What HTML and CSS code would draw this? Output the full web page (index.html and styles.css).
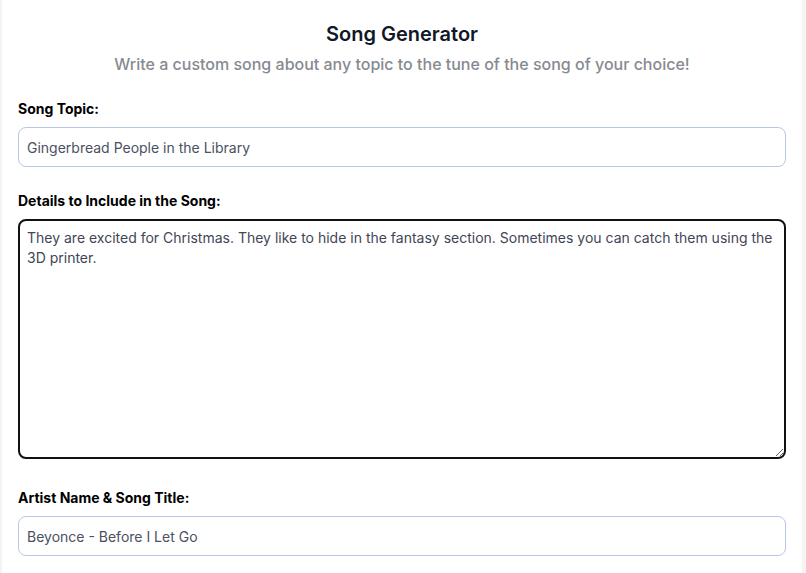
FILE: index.html
```html
<!DOCTYPE html>
<html lang="en">
<head>
<meta charset="utf-8">
<title>Song Generator</title>
<link rel="stylesheet" href="styles.css">
</head>
<body>
<main class="panel">
  <h1 class="title">Song Generator</h1>
  <p class="subtitle">Write a custom song about any topic to the tune of the song of your choice!</p>
  <form class="form">
    <div class="field field-topic">
      <label class="label" for="topic">Song Topic:</label>
      <input class="input" id="topic" type="text" value="Gingerbread People in the Library">
    </div>
    <div class="field field-details">
      <label class="label" for="details">Details to Include in the Song:</label>
      <textarea class="textarea" id="details">They are excited for Christmas. They like to hide in the fantasy section. Sometimes you can catch them using the 3D printer.</textarea>
    </div>
    <div class="field field-artist">
      <label class="label" for="artist">Artist Name &amp; Song Title:</label>
      <input class="input" id="artist" type="text" value="Beyonce - Before I Let Go">
    </div>
  </form>
</main>
</body>
</html>
```

FILE: styles.css
```css
html, body {
  margin: 0;
  padding: 0;
}
body {
  background: #f5f4f0;
  font-family: Inter, "Noto Sans", "Liberation Sans", sans-serif;
  height: 573px;
  overflow: hidden;
}
.panel {
  margin-left: 2px;
  width: 800px;
  box-sizing: border-box;
  min-height: 573px;
  background: #ffffff;
  padding: 20px 16px 0 16px;
}
.title {
  margin: 0;
  text-align: center;
  font-size: 20px;
  line-height: 28px;
  font-weight: 600;
  color: #111827;
}
.subtitle {
  margin: 4px 0 0 0;
  text-align: center;
  font-size: 16px;
  line-height: 24px;
  font-weight: 500;
  color: #878a91;
}
.form {
  display: flex;
  flex-direction: column;
  margin-top: 23px;
}
.field {
  display: flex;
  flex-direction: column;
  gap: 8px;
}
.field-details {
  margin-top: 24px;
}
.field-artist {
  margin-top: 29px;
}
.label {
  font-size: 14px;
  line-height: 20px;
  font-weight: 700;
  color: #000000;
}
.input {
  box-sizing: border-box;
  height: 40px;
  width: 768px;
  margin: 0;
  padding: 0 8px;
  border: 1px solid #b8c7e6;
  border-radius: 8px;
  font-family: inherit;
  font-size: 14px;
  color: #4b5161;
  background: #ffffff;
  outline: none;
}
.textarea {
  display: block;
  box-sizing: border-box;
  width: 768px;
  height: 240px;
  margin: 0;
  padding: 7px 7px;
  border: 2px solid #111111;
  border-radius: 8px;
  font-family: inherit;
  font-size: 14px;
  line-height: 20px;
  color: #3f4656;
  background: #ffffff;
  resize: vertical;
  outline: none;
}
```
